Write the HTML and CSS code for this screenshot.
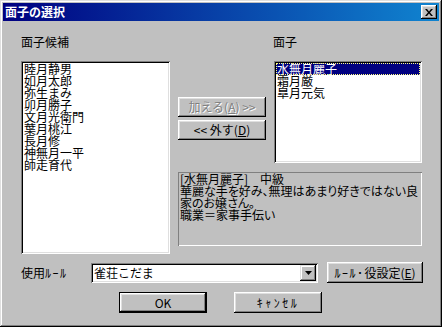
FILE: index.html
```html
<!DOCTYPE html>
<html lang="ja">
<head>
<meta charset="utf-8">
<title>面子の選択</title>
<link rel="stylesheet" href="styles.css">
</head>
<body>
<div class="window">
  <div class="titlebar">
    <span class="title">面子の選択</span>
    <span class="close"><svg width="8" height="7" viewBox="0 0 8 7"><path d="M0 0h2l2 2.5L6 0h2L5 3.5L8 7H6L4 4.5L2 7H0l3-3.5z" fill="#000"/></svg></span>
  </div>
  <div class="content">
    <div class="top">
      <div class="lbl lbl-left">面子候補</div>
      <div class="lbl lbl-right">面子</div>
      <div class="list list-left">
        <div class="item">睦月静男</div>
        <div class="item">如月太郎</div>
        <div class="item">弥生まみ</div>
        <div class="item">卯月勝子</div>
        <div class="item">文月光衛門</div>
        <div class="item">葉月桃江</div>
        <div class="item">長月修</div>
        <div class="item">神無月一平</div>
        <div class="item">師走育代</div>
      </div>
      <div class="mid">
        <button class="btn btn-disabled">加える(<u>A</u>) &gt;&gt;</button>
        <button class="btn">&lt;&lt; 外す(<u>D</u>)</button>
      </div>
      <div class="list list-right">
        <div class="item selected">水無月麗子</div>
        <div class="item">霜月厳</div>
        <div class="item">皐月元気</div>
      </div>
      <div class="info">[水無月麗子]　中級<br>華麗な手を好み、無理はあまり好きではない良<br>家のお嬢さん。<br>職業＝家事手伝い</div>
    </div>
    <div class="rule-row">
      <span class="rule-lbl">使用<span class="hw">ﾙｰﾙ</span></span>
      <div class="combo">
        <span class="combo-text">雀荘こだま</span>
        <span class="combo-btn"><svg width="7" height="4" viewBox="0 0 7 4"><path d="M0 0h7L3.5 4z" fill="#000"/></svg></span>
      </div>
      <button class="btn btn-rule"><span class="hw">ﾙｰﾙ･</span>役設定(<u>E</u>)</button>
    </div>
    <div class="ok-row">
      <button class="btn btn-ok">OK</button>
      <button class="btn btn-cancel"><span class="hw hw-wide">ｷｬﾝｾﾙ</span></button>
    </div>
  </div>
</div>
</body>
</html>
```
FILE: styles.css
```css
html, body {
  margin: 0;
  padding: 0;
  background: #c0c0c0;
}
body {
  font-family: "Noto Sans CJK JP", "Noto Sans", sans-serif;
  font-size: 12px;
  line-height: 12px;
  color: #000;
}
.window {
  width: 442px;
  height: 327px;
  box-sizing: border-box;
  padding: 3px;
  background: #c0c0c0;
  box-shadow: inset -1px -1px #000, inset 1px 1px #dfdfdf, inset -2px -2px #808080, inset 2px 2px #fff;
}
.titlebar {
  height: 18px;
  display: flex;
  align-items: center;
  justify-content: space-between;
  padding: 0 2px 0 2px;
  background: linear-gradient(to right, #000080, #1084d0);
}
.title {
  color: #fff;
  font-weight: bold;
  font-size: 12px;
  line-height: 12px;
}
.close {
  width: 16px;
  height: 14px;
  display: flex;
  align-items: center;
  justify-content: center;
  background: #c0c0c0;
  box-shadow: inset -1px -1px #000, inset 1px 1px #fff, inset -2px -2px #808080, inset 2px 2px #dfdfdf;
}
.content {
  padding: 15px 0 0 18px;
}
.top {
  display: grid;
  grid-template-columns: 149px 88px 148px;
  grid-template-rows: 25px 102px auto;
  column-gap: 8px;
}
.lbl {
  grid-row: 1;
  align-self: start;
}
.lbl-left { grid-column: 1; }
.lbl-right { grid-column: 3; margin-left: -1px; }
.list {
  background: #fff;
  box-sizing: border-box;
  padding: 2px;
  box-shadow: inset 1px 1px #808080, inset -1px -1px #fff, inset 2px 2px #000, inset -2px -2px #dfdfdf;
}
.list-left {
  grid-column: 1;
  grid-row: 2 / span 2;
  height: 193px;
  padding-left: 3px;
}
.list-right {
  grid-column: 3;
  grid-row: 2;
  height: 102px;
}
.item {
  height: 12px;
  line-height: 12px;
  white-space: nowrap;
}
.list-right .item {
  padding-left: 1px;
}
.item.selected {
  background: #000080;
  color: #fff;
  outline: 1px dotted #ffff80;
  outline-offset: -1px;
}
.mid {
  grid-column: 2;
  grid-row: 2;
  display: flex;
  flex-direction: column;
  gap: 3px;
  padding-top: 36px;
}
.btn {
  font-family: inherit;
  font-size: 12px;
  line-height: 12px;
  color: #000;
  background: #c0c0c0;
  border: none;
  margin: 0;
  padding: 0;
  height: 20px;
  width: 88px;
  box-shadow: inset -1px -1px #000, inset 1px 1px #fff, inset -2px -2px #808080, inset 2px 2px #dfdfdf;
}
.btn-disabled {
  color: #808080;
  text-shadow: 1px 1px #fff;
}
.hw {
  letter-spacing: 1.5px;
}
.hw-wide {
  letter-spacing: 2.5px;
}
.info {
  grid-column: 2 / span 2;
  grid-row: 3;
  align-self: start;
  margin-top: 9px;
  height: 74px;
  box-sizing: border-box;
  padding: 1px 0 0 2px;
  white-space: nowrap;
  font-feature-settings: "palt";
  box-shadow: inset 1px 1px #808080, inset -1px -1px #fff;
}
.rule-row {
  display: flex;
  align-items: center;
  height: 21px;
  margin-top: 8px;
}
.rule-lbl {
  width: 70px;
}
.combo {
  width: 227px;
  height: 20px;
  box-sizing: border-box;
  padding: 2px;
  background: #fff;
  display: flex;
  align-items: center;
  justify-content: space-between;
  box-shadow: inset 1px 1px #808080, inset -1px -1px #fff, inset 2px 2px #000, inset -2px -2px #dfdfdf;
}
.combo-text {
  padding-left: 1px;
}
.combo-btn {
  width: 16px;
  height: 16px;
  display: flex;
  align-items: center;
  justify-content: center;
  background: #c0c0c0;
  box-shadow: inset -1px -1px #000, inset 1px 1px #dfdfdf, inset -2px -2px #808080, inset 2px 2px #fff;
}
.btn-rule {
  width: 96px;
  height: 21px;
  margin-left: 9px;
}
.ok-row {
  display: flex;
  gap: 27px;
  margin-top: 9px;
  padding-left: 98px;
}
.btn-ok, .btn-cancel {
  height: 21px;
}
.btn-ok {
  box-shadow: inset 0 0 0 1px #000, inset -2px -2px #000, inset 2px 2px #fff, inset -3px -3px #808080, inset 3px 3px #dfdfdf;
}
```
